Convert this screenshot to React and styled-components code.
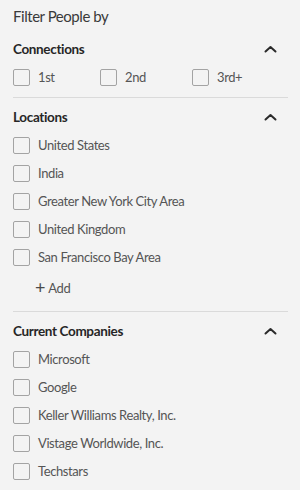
import React from 'react';
import styled, { createGlobalStyle } from 'styled-components';

const GlobalStyle = createGlobalStyle`
  html, body {
    margin: 0;
    padding: 0;
    background: #f3f3f3;
  }
  body {
    font-family: Lato, "Open Sans", sans-serif;
  }
`;

const connections = ['1st', '2nd', '3rd+'];
const locations = ['United States', 'India', 'Greater New York City Area', 'United Kingdom', 'San Francisco Bay Area'];
const companies = ['Microsoft', 'Google', 'Keller Williams Realty, Inc.', 'Vistage Worldwide, Inc.', 'Techstars'];

const Chevron = () => (
    <svg width="13" height="8" viewBox="0 0 13 8">
        <path d="M1.5 6.5 L6.5 2 L11.5 6.5" fill="none" stroke="#2a2a2a" strokeWidth="2" strokeLinecap="round" strokeLinejoin="round" />
    </svg>
);

const Option = ({ label }) => (
    <Item>
        <Box />
        <span>{label}</span>
    </Item>
);

const Section = ({ title, children, last }) => (
    <Group $last={last}>
        <Header>
            <h3>{title}</h3>
            <Chevron />
        </Header>
        {children}
    </Group>
);

const App = () => {
    return (
        <Panel>
            <GlobalStyle />
            <Title>Filter People by</Title>
            <Section title="Connections">
                <Inline>
                    {connections.map((c) => <Option key={c} label={c} />)}
                </Inline>
            </Section>
            <Section title="Locations">
                <List>
                    {locations.map((l) => <Option key={l} label={l} />)}
                </List>
                <AddButton>
                    <span className="plus">+</span> Add
                </AddButton>
            </Section>
            <Section title="Current Companies" last>
                <List>
                    {companies.map((c) => <Option key={c} label={c} />)}
                </List>
            </Section>
        </Panel>
    );
};

const Panel = styled.div`
    width: 300px;
    height: 490px;
    box-sizing: border-box;
    padding: 0 12px 0 13px;
    background: #f3f3f3;
    overflow: hidden;
`;

const Title = styled.div`
    height: 30px;
    display: flex;
    align-items: center;
    padding-top: 2px;
    box-sizing: border-box;
    font-size: 15px;
    letter-spacing: -0.45px;
    color: #3a3a3a;
`;

const Group = styled.section`
    padding: 9px 0 ${(p) => (p.$last ? '0' : '6px')};
    border-bottom: ${(p) => (p.$last ? 'none' : '1px solid #dadada')};
`;

const Header = styled.div`
    height: 20px;
    display: flex;
    align-items: center;
    justify-content: space-between;
    padding-right: 11px;
    margin-bottom: 4px;
    h3 {
        margin: 0;
        font-size: 13.5px;
        font-weight: 700;
        letter-spacing: -0.35px;
        color: #262626;
    }
    svg {
        margin-top: -1px;
    }
`;

const List = styled.div`
    display: flex;
    flex-direction: column;
`;

const Inline = styled.div`
    display: grid;
    grid-template-columns: 87px 92px 1fr;
`;

const Item = styled.label`
    height: 28px;
    display: flex;
    align-items: center;
    gap: 8px;
    font-size: 13px;
    letter-spacing: -0.4px;
    color: #555;
`;

const Box = styled.span`
    width: 17px;
    height: 17px;
    box-sizing: border-box;
    border: 1.5px solid #a3a3a3;
    border-radius: 2px;
    flex-shrink: 0;
`;

const AddButton = styled.div`
    height: 28px;
    display: flex;
    align-items: center;
    gap: 3px;
    padding-left: 22px;
    margin-top: 3px;
    margin-bottom: 3px;
    font-size: 13px;
    letter-spacing: -0.3px;
    color: #555;
    .plus {
        font-size: 18px;
        line-height: 1;
        color: #4a4a4a;
        margin-top: -2px;
    }
`;

export default App;
